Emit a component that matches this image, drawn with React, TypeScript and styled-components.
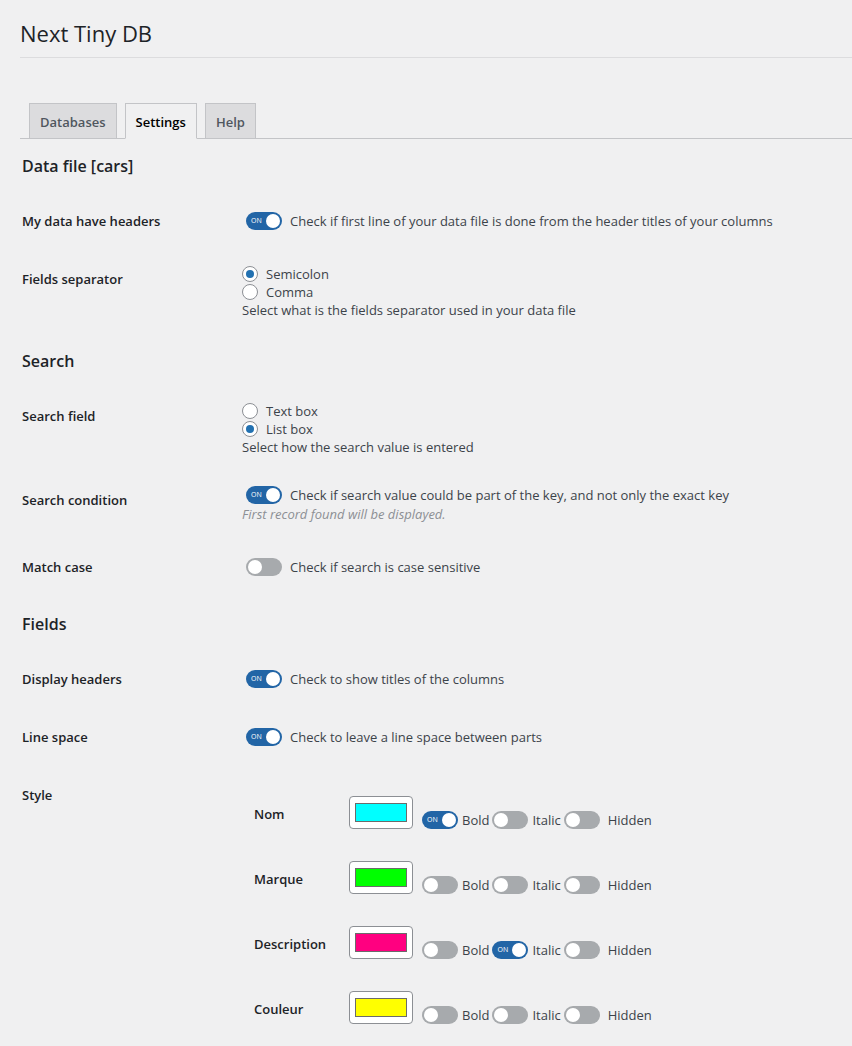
import React from 'react';
import styled, { createGlobalStyle } from 'styled-components';

const GlobalStyle = createGlobalStyle`
  html, body {
    margin: 0;
    padding: 0;
    background: #f0f0f1;
  }

  body {
    font-family: 'Open Sans', 'Noto Sans', sans-serif;
    color: #1d2327;
    font-size: 13px;
  }
`;

type FieldStyle = {
  name: string;
  color: string;
  bold: boolean;
  italic: boolean;
  hidden: boolean;
};

const FIELDS: FieldStyle[] = [
  { name: 'Nom', color: '#00ffff', bold: true, italic: false, hidden: false },
  { name: 'Marque', color: '#00ff00', bold: false, italic: false, hidden: false },
  { name: 'Description', color: '#ff0080', bold: false, italic: true, hidden: false },
  { name: 'Couleur', color: '#ffff00', bold: false, italic: false, hidden: false },
];

const Toggle = ({ on }: { on: boolean }) => (
  <Switch $on={on}>
    {on && <SwitchText>ON</SwitchText>}
    <Knob $on={on} />
  </Switch>
);

const Radio = ({ checked, label }: { checked: boolean; label: string }) => (
  <RadioLine>
    <RadioCircle>{checked && <RadioDot />}</RadioCircle>
    {label}
  </RadioLine>
);

const ToggleOption = ({ on, children }: { on: boolean; children: React.ReactNode }) => (
  <OptionItem>
    <Toggle on={on} />
    <span>{children}</span>
  </OptionItem>
);

export default function App() {
  return (
    <>
      <GlobalStyle />
      <Page>
        <Title>Next Tiny DB</Title>
        <Divider />

        <Tabs>
          <Tab>Databases</Tab>
          <Tab $active>Settings</Tab>
          <Tab>Help</Tab>
        </Tabs>

        <Content>
          <SectionTitle>Data file [cars]</SectionTitle>

          <Row>
            <Label>My data have headers</Label>
            <Field>
              <ToggleLine>
                <Toggle on />
                <span>Check if first line of your data file is done from the header titles of your columns</span>
              </ToggleLine>
            </Field>
          </Row>

          <Row>
            <Label>Fields separator</Label>
            <Field>
              <Radio checked label="Semicolon" />
              <Radio checked={false} label="Comma" />
              <Description>Select what is the fields separator used in your data file</Description>
            </Field>
          </Row>

          <SectionTitle>Search</SectionTitle>

          <Row>
            <Label>Search field</Label>
            <Field>
              <Radio checked={false} label="Text box" />
              <Radio checked label="List box" />
              <Description>Select how the search value is entered</Description>
            </Field>
          </Row>

          <Row>
            <Label>Search condition</Label>
            <Field>
              <ToggleLine>
                <Toggle on />
                <span>Check if search value could be part of the key, and not only the exact key</span>
              </ToggleLine>
              <Hint>First record found will be displayed.</Hint>
            </Field>
          </Row>

          <Row>
            <Label>Match case</Label>
            <Field>
              <ToggleLine>
                <Toggle on={false} />
                <span>Check if search is case sensitive</span>
              </ToggleLine>
            </Field>
          </Row>

          <SectionTitle $gap={16}>Fields</SectionTitle>

          <Row>
            <Label>Display headers</Label>
            <Field>
              <ToggleLine>
                <Toggle on />
                <span>Check to show titles of the columns</span>
              </ToggleLine>
            </Field>
          </Row>

          <Row>
            <Label>Line space</Label>
            <Field>
              <ToggleLine>
                <Toggle on />
                <span>Check to leave a line space between parts</span>
              </ToggleLine>
            </Field>
          </Row>

          <Row>
            <Label>Style</Label>
            <StyleTable>
              {FIELDS.map((field) => (
                <StyleRow key={field.name}>
                  <StyleName>{field.name}</StyleName>
                  <StyleControls>
                    <Swatch>
                      <SwatchColor $color={field.color} />
                    </Swatch>
                    <ToggleOption on={field.bold}>Bold</ToggleOption>
                    <ToggleOption on={field.italic}>Italic</ToggleOption>
                    <ToggleOption on={field.hidden}>
                      <HiddenText>Hidden</HiddenText>
                    </ToggleOption>
                  </StyleControls>
                </StyleRow>
              ))}
            </StyleTable>
          </Row>
        </Content>
      </Page>
    </>
  );
}

const Page = styled.div`
  padding: 18px 0 0 20px;
`;

const Title = styled.h1`
  margin: 0;
  font-size: 22px;
  font-weight: 400;
  line-height: 30px;
  color: #1d2327;
`;

const Divider = styled.div`
  height: 1px;
  margin-top: 9px;
  background: #dcdcde;
`;

const Tabs = styled.div`
  display: flex;
  align-items: flex-end;
  margin-top: 45px;
  padding-left: 9px;
  border-bottom: 1px solid #c3c4c7;
`;

const Tab = styled.div<{ $active?: boolean }>`
  margin-right: 8px;
  margin-bottom: -1px;
  padding: 0 10px;
  height: 34px;
  line-height: 36px;
  font-size: 13px;
  font-weight: 600;
  border: 1px solid #c3c4c7;
  border-bottom-color: ${({ $active }) => ($active ? '#f0f0f1' : '#c3c4c7')};
  background: ${({ $active }) => ($active ? '#f0f0f1' : '#dcdcde')};
  color: ${({ $active }) => ($active ? '#000' : '#50575e')};
`;

const Content = styled.div`
  padding-left: 2px;
`;

const SectionTitle = styled.h2<{ $gap?: number }>`
  margin: ${({ $gap }) => $gap ?? 15}px 0 14px;
  font-size: 16px;
  font-weight: 600;
  line-height: 24px;
  color: #1d2327;
`;

const Row = styled.div`
  display: grid;
  grid-template-columns: 220px 1fr;
  align-items: center;
`;

const Label = styled.div`
  align-self: start;
  padding: 20px 10px 20px 0;
  font-size: 13px;
  font-weight: 600;
  line-height: 18px;
  color: #1d2327;
`;

const Field = styled.div`
  padding: 15px 0;
  font-size: 13px;
  line-height: 18px;
  color: #3c434a;
`;

const ToggleLine = styled.div`
  display: flex;
  align-items: center;
  gap: 8px;
  height: 18px;
  padding-left: 4px;
`;

const Switch = styled.span<{ $on: boolean }>`
  position: relative;
  display: inline-block;
  flex: none;
  width: 36px;
  height: 18px;
  border-radius: 9px;
  background: ${({ $on }) => ($on ? '#2265a6' : '#a7aaad')};
`;

const SwitchText = styled.span`
  position: absolute;
  left: 5px;
  top: 0;
  font-size: 7px;
  line-height: 18px;
  color: #fff;
`;

const Knob = styled.span<{ $on: boolean }>`
  position: absolute;
  top: 2px;
  left: ${({ $on }) => ($on ? '20px' : '2px')};
  width: 14px;
  height: 14px;
  border-radius: 50%;
  background: #fff;
`;

const RadioLine = styled.div`
  display: flex;
  align-items: center;
  gap: 8px;
  height: 18px;
`;

const RadioCircle = styled.span`
  display: flex;
  align-items: center;
  justify-content: center;
  box-sizing: border-box;
  width: 16px;
  height: 16px;
  border: 1px solid #8c8f94;
  border-radius: 50%;
  background: #fff;
`;

const RadioDot = styled.span`
  width: 8px;
  height: 8px;
  border-radius: 50%;
  background: #2271b1;
`;

const Description = styled.div`
  color: #3c434a;
`;

const Hint = styled.div`
  margin-top: 1px;
  font-style: italic;
  color: #8c8f94;
`;

const StyleTable = styled.div`
  align-self: start;
  padding: 19px 0 0 12px;
`;

const StyleRow = styled.div`
  display: grid;
  grid-template-columns: 95px auto;
  height: 65px;
`;

const StyleName = styled.div`
  padding-top: 20px;
  font-size: 13px;
  font-weight: 600;
  line-height: 18px;
  color: #1d2327;
`;

const StyleControls = styled.div`
  display: flex;
  align-items: flex-end;
  align-self: start;
  gap: 3px;
  padding-top: 11px;
  font-size: 13px;
  color: #3c434a;
`;

const Swatch = styled.div`
  box-sizing: border-box;
  width: 64px;
  height: 33px;
  margin-right: 6px;
  padding: 6px 5px;
  border: 1px solid #8c8f94;
  border-radius: 4px;
  background: #fff;
`;

const SwatchColor = styled.div<{ $color: string }>`
  box-sizing: border-box;
  width: 100%;
  height: 100%;
  border: 1px solid #6b6b6b;
  background: ${({ $color }) => $color};
`;

const OptionItem = styled.div`
  display: flex;
  align-items: center;
  gap: 4px;
  height: 18px;
  line-height: 18px;
`;

const HiddenText = styled.span`
  padding-left: 4px;
`;
